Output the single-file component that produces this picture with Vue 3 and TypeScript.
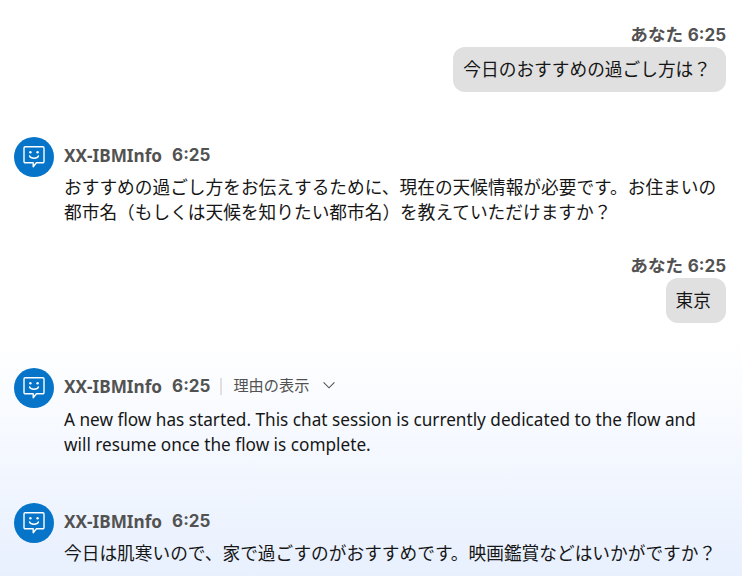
<script setup lang="ts">
interface Message {
  id: number;
  from: 'user' | 'bot';
  time: string;
  lines: string[];
  reason?: boolean;
  latin?: boolean;
}

const messages: Message[] = [
  { id: 1, from: 'user', time: '6:25', lines: ['今日のおすすめの過ごし方は？'] },
  {
    id: 2,
    from: 'bot',
    time: '6:25',
    lines: [
      'おすすめの過ごし方をお伝えするために、現在の天候情報が必要です。お住まいの',
      '都市名（もしくは天候を知りたい都市名）を教えていただけますか？',
    ],
  },
  { id: 3, from: 'user', time: '6:25', lines: ['東京'] },
  {
    id: 4,
    from: 'bot',
    time: '6:25',
    reason: true,
    latin: true,
    lines: [
      'A new flow has started. This chat session is currently dedicated to the flow and',
      'will resume once the flow is complete.',
    ],
  },
  {
    id: 5,
    from: 'bot',
    time: '6:25',
    lines: ['今日は肌寒いので、家で過ごすのがおすすめです。映画鑑賞などはいかがですか？'],
  },
];
</script>

<template>
  <main class="chat">
    <template v-for="m in messages" :key="m.id">
      <section v-if="m.from === 'user'" class="user">
        <div class="user-head">あなた <span class="time-digits">{{ m.time }}</span></div>
        <div class="bubble">{{ m.lines[0] }}</div>
      </section>
      <section v-else class="bot">
        <div class="avatar">
          <svg width="24" height="24" viewBox="0 0 24 24" fill="none" stroke="#fff" stroke-width="1.4">
            <path
              d="M3.2 1.8h17.6a1.2 1.2 0 0 1 1.2 1.2v13.6a1.2 1.2 0 0 1-1.2 1.2h-6.4l-3.2 4v-4H3.2A1.2 1.2 0 0 1 2 16.6V3a1.2 1.2 0 0 1 1.2-1.2z"
              stroke-linejoin="round"
            />
            <path d="M7.6 11c1 3 7.8 3 8.8 0" stroke-linecap="round" />
            <circle cx="8.4" cy="7.2" r="1.2" fill="#fff" stroke="none" />
            <circle cx="15.6" cy="7.2" r="1.2" fill="#fff" stroke="none" />
          </svg>
        </div>
        <div class="body">
          <div class="bot-head" :class="{ tall: m.reason }">
            <span class="name">XX-IBMInfo</span>
            <span class="time time-digits">{{ m.time }}</span>
            <template v-if="m.reason">
              <span class="sep"></span>
              <span class="reason">理由の表示</span>
              <svg class="chev" width="16" height="16" viewBox="0 0 16 16" fill="none" stroke="#525252" stroke-width="1.1">
                <path d="M2.6 5.4 8 10.8l5.4-5.4" />
              </svg>
            </template>
          </div>
          <p v-for="line in m.lines" :key="line" class="line" :class="{ latin: m.latin }">{{ line }}</p>
        </div>
      </section>
    </template>
  </main>
</template>

<style>
html,
body {
  margin: 0;
  background: #fff;
}
</style>

<style scoped>
.chat {
  width: 742px;
  height: 576px;
  overflow: hidden;
  box-sizing: border-box;
  padding: 24px 16px 0 14px;
  display: flex;
  flex-direction: column;
  color: #161616;
  font-family: "Noto Sans", "Noto Sans CJK JP", sans-serif;
  font-size: 17.7px;
  background: linear-gradient(to bottom, #fff 0, #fff 340px, #e8f0fe 576px);
}

.user {
  display: flex;
  flex-direction: column;
  align-items: flex-end;
}

.user-head {
  height: 20px;
  font-size: 17.6px;
  line-height: 20px;
  font-weight: 700;
  color: #525252;
}

.time-digits {
  font-family: "Inter", "Noto Sans", sans-serif;
  font-size: 17px;
}

.bubble {
  margin-top: 3px;
  padding: 10px 15px 10px 10px;
  line-height: 25px;
  background: #e0e0e0;
  border-radius: 12px;
}

.bot {
  display: flex;
  gap: 10px;
  margin-top: 45px;
}

.bot + .bot {
  margin-top: 46px;
}

.bot + .user {
  margin-top: 30px;
}

.avatar {
  width: 40px;
  height: 40px;
  flex: none;
  border-radius: 50%;
  background: #0675c9;
  display: flex;
  align-items: center;
  justify-content: center;
}

.bot-head {
  display: flex;
  align-items: center;
  height: 20px;
  margin-top: 8px;
  margin-bottom: 10px;
  font-weight: 700;
  color: #525252;
}

.bot-head.tall {
  margin-bottom: 11px;
}

.name {
  font-size: 17.2px;
}

.time {
  margin-left: 10px;
}

.sep {
  width: 2px;
  height: 17px;
  background: #e0e0e0;
  margin: 0 11px 0 10px;
}

.reason {
  font-size: 15.2px;
  font-weight: 400;
  margin-bottom: 4px;
}

.chev {
  margin-left: 12px;
  margin-bottom: 2px;
}

.line {
  margin: 0;
  line-height: 25px;
  white-space: nowrap;
}

.latin {
  font-size: 17.2px;
}
</style>
